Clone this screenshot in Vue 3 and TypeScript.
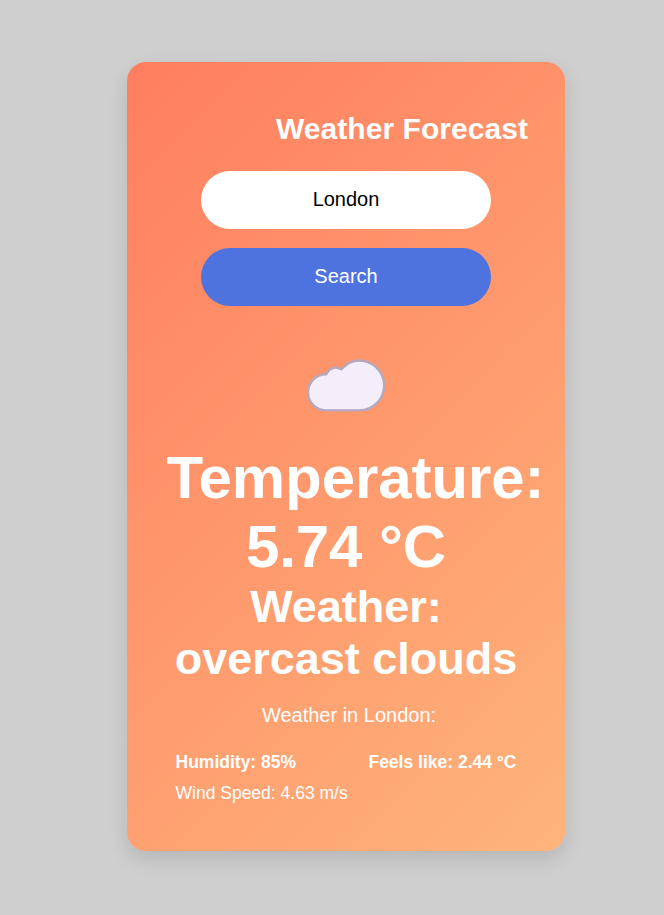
<script setup lang="ts">
import { ref } from 'vue'

interface Weather {
  city: string
  temperature: number
  description: string
  humidity: number
  feelsLike: number
  windSpeed: number
}

const city = ref<string>('London')
const weather = ref<Weather>({
  city: 'London',
  temperature: 5.74,
  description: 'overcast clouds',
  humidity: 85,
  feelsLike: 2.44,
  windSpeed: 4.63,
})

function search(): void {
  weather.value = { ...weather.value, city: city.value }
}
</script>

<template>
  <main class="page">
    <section class="card">
      <h1 class="title">Weather Forecast</h1>
      <form class="search" @submit.prevent="search">
        <input v-model="city" class="field" type="text" aria-label="City" />
        <button class="button" type="submit">Search</button>
      </form>
      <svg class="cloud" viewBox="0 0 110 80" aria-hidden="true">
        <path
          d="M36 65.4 C26 65.4 18 57.4 18 47.3 C18 37.3 26 29.3 36 29.3 C40 22.5 46 21.2 51.3 24.3 C56.5 18.3 62.5 15.5 69.2 15.5 C83 15.5 94.2 26.6 94.2 40.4 C94.2 54.2 83 65.4 69.2 65.4 Z"
        />
      </svg>
      <h2 class="temperature">Temperature: {{ weather.temperature }} °C</h2>
      <h3 class="condition">Weather: {{ weather.description }}</h3>
      <p class="place">Weather in {{ weather.city }}:</p>
      <div class="details">
        <strong>Humidity: {{ weather.humidity }}%</strong>
        <strong>Feels like: {{ weather.feelsLike }} °C</strong>
        <span>Wind Speed: {{ weather.windSpeed }} m/s</span>
      </div>
    </section>
  </main>
</template>

<style>
body {
  background: #cfcfcf;
}
</style>

<style scoped>
.page {
  box-sizing: border-box;
  height: 915px;
  padding: 62px 99px 64px 127px;
  font-family: Arial, 'Liberation Sans', sans-serif;
}
.card {
  box-sizing: border-box;
  display: flex;
  flex-direction: column;
  align-items: center;
  width: 438px;
  height: 789px;
  padding: 49px 37px 0;
  border-radius: 19px;
  background: linear-gradient(135deg, #ff7e5f, #feb47b);
  box-shadow: 0 8px 20px rgba(0, 0, 0, 0.12);
  color: #fff;
}
.title {
  align-self: flex-end;
  margin: 0;
  font-size: 30px;
  line-height: 35px;
  letter-spacing: 0.05px;
}
.search {
  display: flex;
  flex-direction: column;
  gap: 19px;
  width: 290px;
  margin-top: 25px;
}
.field,
.button {
  box-sizing: border-box;
  width: 100%;
  height: 58px;
  margin: 0;
  padding: 0 19px 2px;
  border: none;
  border-radius: 29px;
  font: 20px Arial, 'Liberation Sans', sans-serif;
  text-align: center;
  outline: none;
}
.field {
  background: #fff;
  color: #000;
}
.button {
  background: #4e73df;
  color: #fff;
}
.cloud {
  width: 110px;
  height: 80px;
  margin: 39px 2px 0 0;
}
.cloud path {
  fill: #f3eef9;
  stroke: #b5a8bd;
  stroke-width: 2.4;
  stroke-linejoin: round;
}
.temperature,
.condition {
  margin: 0;
  text-align: center;
}
.temperature {
  width: 360px;
  margin-top: 18px;
  font-size: 60px;
  line-height: 69px;
  letter-spacing: -0.1px;
  text-indent: 0.5px;
}
.condition {
  width: 350px;
  font-size: 45px;
  line-height: 52px;
}
.place {
  margin: 19px 0 0 6px;
  font-size: 20px;
  line-height: 23px;
}
.details {
  display: grid;
  grid-template-columns: auto auto;
  justify-content: space-between;
  row-gap: 11px;
  width: 341px;
  margin-top: 25px;
  font-size: 17.5px;
  line-height: 20px;
}
</style>
